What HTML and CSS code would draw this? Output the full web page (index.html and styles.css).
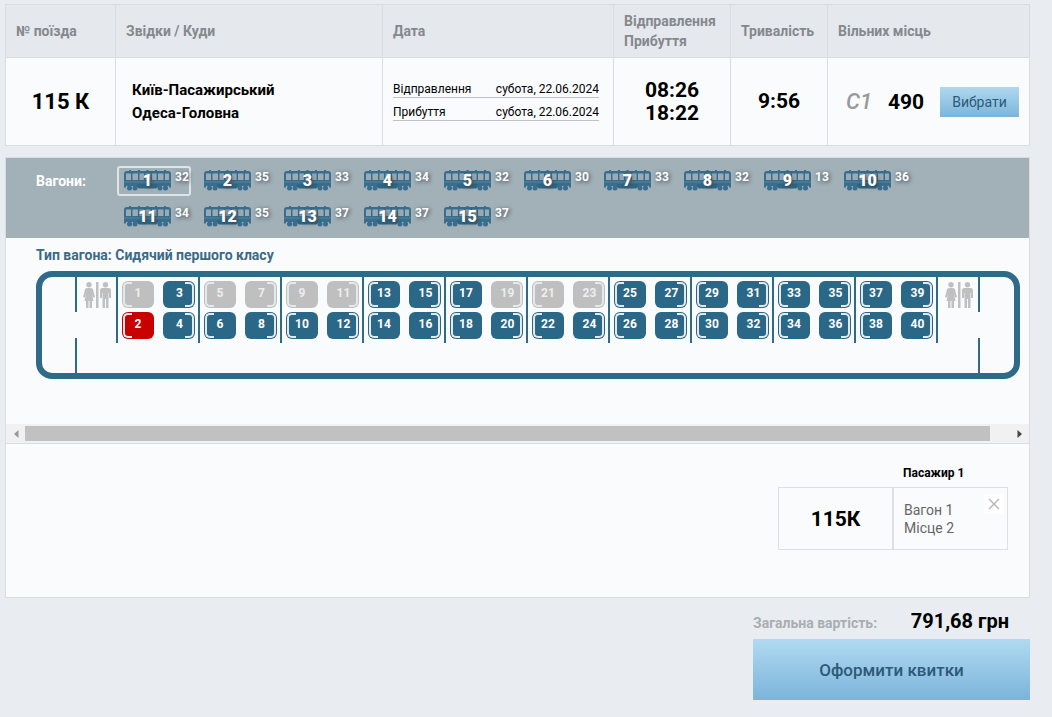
FILE: index.html
```html
<!DOCTYPE html>
<html lang="uk">
<head>
<meta charset="utf-8">
<meta name="viewport" content="width=device-width, initial-scale=1">
<title>Вибір місць</title>
<link rel="stylesheet" href="styles.css">
</head>
<body>
<svg class="sprite" aria-hidden="true">
  <symbol id="wagon" viewBox="0 0 47 21">
    <path fill="#386d8b" d="M5 0h2v1h7V0h2v1h6.500V0h2v1H31V0h2v1h7V0h2v1h2q3 0 3 3V17.500H0V4q0-3 3-3h2z"/>
    <path fill="#98abb6" d="M2 3.500h5v6.500H2zM8.500 3.500h5.500v6.500H8.500zM15.500 3.500h4.500v6.500h-4.500zM21.500 3.500h5v6.500h-5zM28 3.500h4.500v6.500H28zM34 3.500h5.500v6.500H34zM41 3.500h4v6.500h-4z"/>
    <path fill="#5c8299" d="M0 11.500h47v1H0z"/>
    <path fill="#a2b0b8" d="M2 16h11v2H2zM34 16h11v2H34zM13 17h21v1H13z"/>
    <path fill="#2f6684" d="M13 14h21v3l-2 1.500H15L13 17z"/>
    <g fill="#386d8b"><circle cx="5.500" cy="18" r="2.500"/><circle cx="11" cy="18" r="2.500"/><circle cx="36" cy="18" r="2.500"/><circle cx="41.500" cy="18" r="2.500"/></g>
  </symbol>
  <symbol id="wc" viewBox="0 0 28 26">
    <g fill="#c0c0c0">
      <circle cx="6" cy="2.700" r="2.700"/><circle cx="22.500" cy="2.700" r="2.700"/>
      <path d="M13 0h2.500v26H13z"/>
      <path d="M4 6h4q1.500 0 2 1.500l2 7.500-1.800.8L9 12l1.500 7H9v7H6.500v-7h-1v7H3v-7H1.500L3 12l-1.200 3.800L0 15l2-7.500Q2.500 6 4 6z"/>
      <path d="M19.500 6h6q2.500 0 2.500 2.500V16h-2v-5h-.5v15H23v-9h-1v9h-2.500V11H19v5h-2V8.500Q17 6 19.500 6z"/>
    </g>
  </symbol>
</svg>

<main class="page">
  <table class="trains">
    <colgroup><col class="c-num"><col class="c-route"><col class="c-date"><col class="c-time"><col class="c-dur"><col class="c-free"></colgroup>
    <thead>
      <tr><th>№ поїзда</th><th>Звідки / Куди</th><th>Дата</th><th>Відправлення<br>Прибуття</th><th>Тривалість</th><th>Вільних місць</th></tr>
    </thead>
    <tbody>
      <tr>
        <td class="big train-number">115 К</td>
        <td class="route">Київ-Пасажирський<br>Одеса-Головна</td>
        <td class="dates">
          <div class="date"><span>Відправлення</span><span>субота, 22.06.2024</span></div>
          <div class="date"><span>Прибуття</span><span>субота, 22.06.2024</span></div>
        </td>
        <td class="big">08:26<br>18:22</td>
        <td class="big">9:56</td>
        <td><div class="free"><i class="class-name">С1</i><b class="count">490</b><button class="choose" type="button">Вибрати</button></div></td>
      </tr>
    </tbody>
  </table>

  <section class="panel">
    <div class="wagons">
      <span class="wagons-label">Вагони:</span>
      <div class="wagon-list">
        <button class="wagon selected" type="button"><span class="car-icon"><svg><use href="#wagon"/></svg><b>1</b></span><span class="left">32</span></button>
        <button class="wagon" type="button"><span class="car-icon"><svg><use href="#wagon"/></svg><b>2</b></span><span class="left">35</span></button>
        <button class="wagon" type="button"><span class="car-icon"><svg><use href="#wagon"/></svg><b>3</b></span><span class="left">33</span></button>
        <button class="wagon" type="button"><span class="car-icon"><svg><use href="#wagon"/></svg><b>4</b></span><span class="left">34</span></button>
        <button class="wagon" type="button"><span class="car-icon"><svg><use href="#wagon"/></svg><b>5</b></span><span class="left">32</span></button>
        <button class="wagon" type="button"><span class="car-icon"><svg><use href="#wagon"/></svg><b>6</b></span><span class="left">30</span></button>
        <button class="wagon" type="button"><span class="car-icon"><svg><use href="#wagon"/></svg><b>7</b></span><span class="left">33</span></button>
        <button class="wagon" type="button"><span class="car-icon"><svg><use href="#wagon"/></svg><b>8</b></span><span class="left">32</span></button>
        <button class="wagon" type="button"><span class="car-icon"><svg><use href="#wagon"/></svg><b>9</b></span><span class="left">13</span></button>
        <button class="wagon" type="button"><span class="car-icon"><svg><use href="#wagon"/></svg><b>10</b></span><span class="left">36</span></button>
        <button class="wagon" type="button"><span class="car-icon"><svg><use href="#wagon"/></svg><b>11</b></span><span class="left">34</span></button>
        <button class="wagon" type="button"><span class="car-icon"><svg><use href="#wagon"/></svg><b>12</b></span><span class="left">35</span></button>
        <button class="wagon" type="button"><span class="car-icon"><svg><use href="#wagon"/></svg><b>13</b></span><span class="left">37</span></button>
        <button class="wagon" type="button"><span class="car-icon"><svg><use href="#wagon"/></svg><b>14</b></span><span class="left">37</span></button>
        <button class="wagon" type="button"><span class="car-icon"><svg><use href="#wagon"/></svg><b>15</b></span><span class="left">37</span></button>
      </div>
    </div>

    <div class="scheme">
      <h2 class="scheme-title">Тип вагона: Сидячий першого класу</h2>
      <div class="car">
        <div class="vestibule"></div>
        <div class="wc"><svg><use href="#wc"/></svg></div>
        <div class="bay"><button class="seat" disabled>1</button><button class="seat">3</button><button class="seat chosen">2</button><button class="seat">4</button></div>
        <div class="bay"><button class="seat" disabled>5</button><button class="seat" disabled>7</button><button class="seat">6</button><button class="seat">8</button></div>
        <div class="bay"><button class="seat" disabled>9</button><button class="seat" disabled>11</button><button class="seat">10</button><button class="seat">12</button></div>
        <div class="bay"><button class="seat">13</button><button class="seat">15</button><button class="seat">14</button><button class="seat">16</button></div>
        <div class="bay"><button class="seat">17</button><button class="seat" disabled>19</button><button class="seat">18</button><button class="seat">20</button></div>
        <div class="bay"><button class="seat" disabled>21</button><button class="seat" disabled>23</button><button class="seat">22</button><button class="seat">24</button></div>
        <div class="bay"><button class="seat">25</button><button class="seat">27</button><button class="seat">26</button><button class="seat">28</button></div>
        <div class="bay"><button class="seat">29</button><button class="seat">31</button><button class="seat">30</button><button class="seat">32</button></div>
        <div class="bay"><button class="seat">33</button><button class="seat">35</button><button class="seat">34</button><button class="seat">36</button></div>
        <div class="bay"><button class="seat">37</button><button class="seat">39</button><button class="seat">38</button><button class="seat">40</button></div>
        <div class="wc wc-end"><svg><use href="#wc"/></svg></div>
        <div class="vestibule vestibule-end"></div>
      </div>
    </div>

    <div class="scrollbar">
      <button class="arrow" type="button" aria-label="Ліворуч" disabled><svg viewBox="0 0 6 8"><path d="M5.500 0v8L1 4z"/></svg></button>
      <div class="track"><div class="thumb"></div></div>
      <button class="arrow" type="button" aria-label="Праворуч"><svg viewBox="0 0 6 8"><path d="M.5 0v8L5 4z"/></svg></button>
    </div>

    <div class="order">
      <div class="ticket">
        <h3 class="passenger">Пасажир 1</h3>
        <div class="ticket-train">115К</div>
        <div class="ticket-place">
          <span>Вагон 1<br>Місце 2</span>
          <button class="remove" type="button" aria-label="Видалити"><svg viewBox="0 0 10 10"><path d="M0 0l10 10M10 0L0 10"/></svg></button>
        </div>
      </div>
    </div>
  </section>

  <footer class="checkout">
    <p class="total"><span>Загальна вартість:</span><strong>791,68 грн</strong></p>
    <button class="submit" type="button">Оформити квитки</button>
  </footer>
</main>
</body>
</html>
```

FILE: styles.css
```css
* { box-sizing: border-box; }

body {
  margin: 0;
  background: #e9edf1;
  color: #000;
  font: 14px/20px Roboto, sans-serif;
}

button {
  padding: 0;
  border: 0;
  background: none;
  font-family: inherit;
  cursor: pointer;
}

svg { display: block; }
.sprite { position: absolute; width: 0; height: 0; }
.page { padding: 4px 22px 16px 5px; }

/* Train summary */
.trains {
  width: 100%;
  table-layout: fixed;
  border-collapse: collapse;
  background: #fafbfd;
}
.c-num { width: 110px; }
.c-route { width: 267px; }
.c-date { width: 231px; }
.c-time { width: 117px; }
.c-dur { width: 97px; }
.trains th, .trains td { border: 1px solid #d8dde1; padding: 0 10px; }
.trains th {
  height: 53px;
  background: #e5e8ed;
  color: #85888c;
  font-weight: 700;
  text-align: left;
  white-space: nowrap;
}
.trains td { height: 88px; }
.trains .big {
  padding: 0;
  font-size: 21px;
  line-height: 23px;
  font-weight: 700;
  text-align: center;
}
.trains .train-number { font-size: 22px; }
.trains .route {
  padding: 0 16px;
  font-size: 15px;
  font-weight: 700;
  line-height: 23px;
}
.date {
  display: flex;
  justify-content: space-between;
  width: 206px;
  margin-bottom: 7px;
  border-bottom: 1px solid #bfc3c7;
  font-size: 12px;
  line-height: 15px;
}
.date + .date { margin-bottom: 0; }
.free { display: flex; align-items: center; padding-left: 8px; }
.class-name { width: 42px; color: #999; font-size: 22px; font-weight: 500; }
.count { flex: 1; font-size: 21px; }
.choose {
  width: 79px;
  height: 30px;
  background: linear-gradient(#afd8ef, #7cb5da);
  color: #2c5a78;
  font-size: 14px;
}

/* Wagon picker */
.panel {
  margin-top: 11px;
  border: 1px solid #d8dde1;
  background: #fafbfd;
}
.wagons {
  display: flex;
  min-height: 80px;
  padding: 8px 90px 0 30px;
  background: #a2b0b8;
  color: #fff;
  font-weight: 700;
}
.wagons-label { width: 81px; font-size: 14px; line-height: 30px; }
.wagon-list { display: flex; flex: 1; flex-wrap: wrap; align-content: flex-start; gap: 6px; }
.wagon {
  display: flex;
  width: 74px;
  height: 30px;
  padding: 2px 0 0 5px;
  border: 2px solid transparent;
  border-radius: 3px;
  color: #fff;
  font-weight: 700;
  text-shadow: 1px 1px 4px #333f49;
}
.wagon.selected { border-color: #dfe4e8; }
.car-icon { display: grid; }
.car-icon svg, .car-icon b { grid-area: 1 / 1; }
.car-icon svg { width: 47px; height: 21px; }
.car-icon b { font-size: 16px; line-height: 21px; }
.left { margin-left: 4px; font-size: 12px; line-height: 14px; }

/* Seat map */
.scheme { padding: 7px 9px 45px 30px; overflow: hidden; }
.scheme-title {
  margin: 0 0 6px;
  color: #3b6a85;
  font-size: 14px;
  line-height: 20px;
}
.car {
  display: flex;
  width: 984px;
  height: 108px;
  border: 6px solid #2f6a89;
  border-radius: 16px;
}
.vestibule {
  width: 35px;
  background:
    linear-gradient(#2f6a89, #2f6a89) right top / 2px 35px no-repeat,
    linear-gradient(#2f6a89, #2f6a89) right bottom / 2px 35px no-repeat;
}
.vestibule-end { flex: 1; background-position: left top, left bottom; }
.wc { width: 39px; padding: 5px 0 0 6px; }
.wc svg { width: 28px; height: 26px; }
.wc-end { width: 42px; height: 66px; padding-left: 7px; border-left: 2px solid #2f6a89; }
.bay {
  display: grid;
  grid-template-columns: 32px 32px;
  grid-auto-rows: 27px;
  gap: 4px 9px;
  width: 82px;
  height: 66px;
  padding: 4px 3px 0 4px;
  border-left: 2px solid #2f6a89;
}
.seat {
  position: relative;
  display: flex;
  justify-content: center;
  border-radius: 6px;
  background: #2b6888;
  color: #fff;
  font-size: 12px;
  line-height: 25px;
  font-weight: 700;
}
.seat:nth-child(even) { padding-left: 1px; }
.seat.chosen { background: #c80000; }
.seat:disabled { background: #bfbfbf; color: #eee; }
/* Armrest bracket along the outer side of the seat */
.seat::before {
  content: "";
  position: absolute;
  top: 1px;
  bottom: 1px;
  left: 1px;
  width: 7px;
  border: 2px solid #e3e9ed;
  border-right: 0;
  border-radius: 5px 0 0 5px;
}
.seat:nth-child(even)::before {
  right: 1px;
  left: auto;
  border: 2px solid #e3e9ed;
  border-left: 0;
  border-radius: 0 5px 5px 0;
}

.scrollbar {
  display: flex;
  height: 20px;
  border-bottom: 1px solid #d8dde1;
  background: #f1f1f2;
}
.arrow { display: grid; place-items: center; width: 19px; fill: #444; }
.arrow:disabled { fill: #999; }
.arrow svg { width: 6px; height: 8px; }
.track { flex: 1; padding: 2px 0; }
.thumb { width: 98%; height: 15px; background: #c1c1c1; }

/* Order */
.order { display: flex; justify-content: flex-end; padding: 19px 21px 47px; }
.ticket { display: grid; grid-template-columns: 115px 115px; }
.passenger {
  grid-column: 2;
  margin: 0 0 4px;
  padding-left: 10px;
  font-size: 12px;
  line-height: 20px;
}
.ticket-train, .ticket-place { height: 63px; border: 1px solid #dddfe2; }
.ticket-train {
  grid-column: 1;
  display: grid;
  place-items: center;
  font-size: 21px;
  font-weight: 700;
}
.ticket-place {
  display: flex;
  align-items: center;
  justify-content: space-between;
  padding-left: 10px;
  color: #666;
  line-height: 18px;
}
.remove { align-self: flex-start; width: 20px; height: 20px; margin: 6px 3px 0 0; background: #fff; display: grid; place-items: center; }
.remove svg { width: 10px; height: 10px; stroke: #b4b4b8; stroke-width: 1.4; fill: none; overflow: visible; }

.checkout { width: 277px; margin: 8px 0 0 auto; }
.total {
  display: flex;
  align-items: baseline;
  justify-content: space-between;
  margin: 0;
  padding-right: 21px;
  line-height: 31px;
}
.total span { color: #aaadb1; font-weight: 700; }
.total strong { font-size: 20px; }
.submit {
  width: 100%;
  height: 61px;
  background: linear-gradient(#b1daf1, #7bb4da);
  color: #2c5a78;
  font-size: 17px;
  font-weight: 500;
}
```
